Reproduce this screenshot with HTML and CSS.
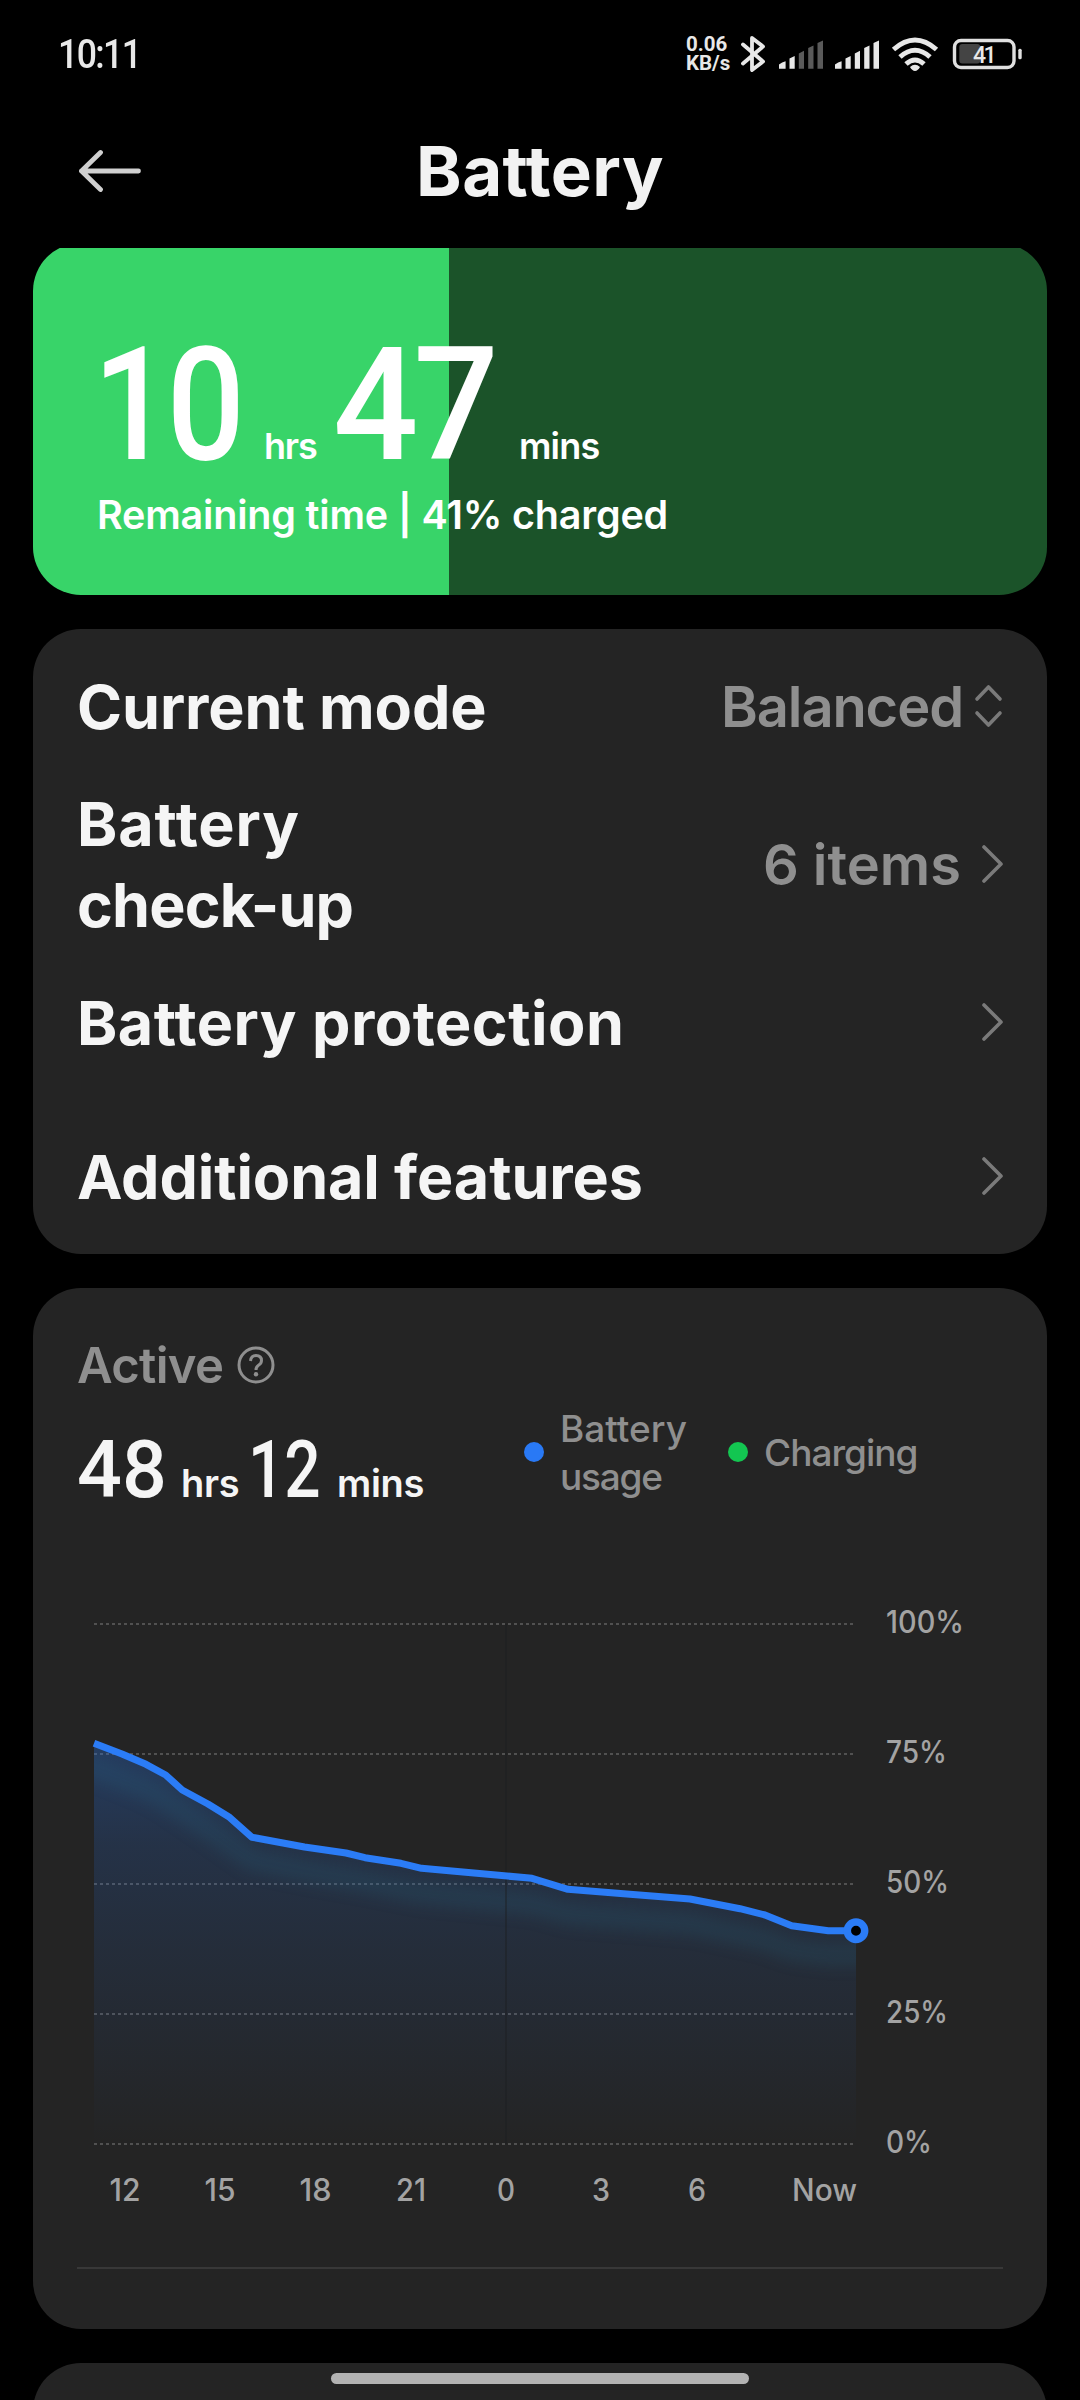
FILE: index.html
```html
<!DOCTYPE html>
<html lang="en">
<head>
<meta charset="utf-8">
<title>Battery</title>
<link rel="stylesheet" href="styles.css">
</head>
<body>
<div class="screen">
  <div class="statusbar">
    <span class="clock">10:11</span>
    <span class="netspeed"><span class="rate">0.06</span><span class="unit">KB/s</span></span>
    <svg class="status-icons" width="290" height="46" viewBox="738 30 290 46">
      <path class="bt" d="M743 44.5 L763 61.5 L752 70 V38 L763 46.5 L743 63.5"/>
      <g class="bars">
        <path d="M779 68.7V64.5Q782 62 785.6 61.3V68.7ZM789.5 68.7V58.5L794.7 56V68.7Z"/>
        <path class="dim" d="M798.8 68.7V53.5L804 50.7V68.7ZM808.2 68.7V48L813.5 45.5V68.7ZM817.5 68.7V43L823 40.5V68.7Z"/>
        <path d="M835 68.7V64.5Q838 62 841.6 61.3V68.7ZM845.5 68.7V58.5L850.7 56V68.7ZM854.8 68.7V53.5L860 50.7V68.7ZM864.2 68.7V48L869.5 45.5V68.7ZM873.5 68.7V43L879 40.5V68.7Z"/>
      </g>
      <g class="wifi">
        <path d="M893.5 49.5Q915 30.5 936.500 49.500"/>
        <path d="M900 57Q915 43.500 930 57"/>
        <path d="M906 64Q915 56 924 64"/>
        <path class="dot" d="M910 67Q915 62.500 920 67Q918 70.700 915 71Q912 70.700 910 67Z"/>
      </g>
      <rect class="cell" x="954.500" y="40.500" width="59.500" height="27" rx="6.500"/>
      <rect class="charge" x="959.300" y="44" width="21" height="19.500" rx="3"/>
      <rect class="nub" x="1018.300" y="48.700" width="3.400" height="10.500" rx="1.500"/>
      <text class="cell-text" x="973" y="63" textLength="23.500">41</text>
    </svg>
  </div>

  <header class="titlebar">
    <svg class="back" width="62" height="46" viewBox="79 148 62 46"><path d="M100.500 152.500L81.500 171L100.500 189.500M81.500 171H138.500"/></svg>
    <h1>Battery</h1>
  </header>

  <div class="hero-clip">
    <section class="hero">
      <div class="hero-time">
        <span class="num n1">10</span><span class="unit u1">hrs</span><span class="num n2">47</span><span class="unit u2">mins</span>
      </div>
      <div class="hero-sub">Remaining time | 41% charged</div>
    </section>
  </div>

  <section class="card menu">
    <div class="row">
      <span class="label l-mode">Current mode</span>
      <span class="value v-mode">Balanced</span>
      <svg class="icon updown" width="30" height="46" viewBox="0 0 30 46"><path d="M4 16L15.500 4L27 16M4 30L15.500 42L27 30"/></svg>
    </div>
    <div class="row tall">
      <span class="label l-check"><span class="l-batt">Battery</span><br>check-up</span>
      <span class="value v-items">6 items</span>
      <svg class="icon chev" width="24" height="42" viewBox="0 0 24 42"><path d="M5 4L22 21L5 38"/></svg>
    </div>
    <div class="row">
      <span class="label l-prot">Battery protection</span>
      <svg class="icon chev" width="24" height="42" viewBox="0 0 24 42"><path d="M5 4L22 21L5 38"/></svg>
    </div>
    <div class="row">
      <span class="label l-add">Additional features</span>
      <svg class="icon chev" width="24" height="42" viewBox="0 0 24 42"><path d="M5 4L22 21L5 38"/></svg>
    </div>
  </section>

  <section class="card usage">
    <div class="active">
      <span>Active</span>
      <svg width="38" height="38" viewBox="0 0 38 38"><circle cx="19" cy="19" r="17"/><path d="M13.500 15Q14 9.500 19 9.500Q24.500 9.500 24.500 14.500Q24.500 17.500 21.500 19.200Q19 20.800 19 24"/><circle class="pt" cx="19" cy="28.300" r="2.200"/></svg>
    </div>
    <div class="summary">
      <div class="total">
        <span class="num n1">48</span><span class="unit u1">hrs</span><span class="num n2">12</span><span class="unit u2">mins</span>
      </div>
      <div class="legend">
        <i class="dot blue"></i><span class="lg-usage">Battery<br><span class="lg-second">usage</span></span>
        <i class="dot green"></i><span class="lg-charge">Charging</span>
      </div>
    </div>
    <svg class="chart" width="926" height="679" viewBox="77 1590 926 677">
      <defs>
        <linearGradient id="area" gradientUnits="userSpaceOnUse" x1="0" y1="1743" x2="0" y2="2144">
          <stop offset="0" stop-color="#2878f5" stop-opacity=".29"/>
          <stop offset=".25" stop-color="#2878f5" stop-opacity=".17"/>
          <stop offset=".5" stop-color="#2878f5" stop-opacity=".11"/>
          <stop offset="1" stop-color="#2878f5" stop-opacity="0"/>
        </linearGradient>
        <filter id="soft" x="-10%" y="-30%" width="120%" height="160%"><feGaussianBlur stdDeviation="8"/></filter>
        <clipPath id="under"><path d="M94 1743.300L122 1754L146 1764.300L165.700 1775L182.200 1790L208 1804L228.700 1816.700L252 1837.300L304.500 1847L346 1853L365 1857.700L401 1863.300L421.600 1868.300L476.700 1873.300L532 1878.300L568 1889.300L626.700 1894L690 1899L740 1908.700L765 1915L791.700 1925.700L828.300 1930.700H856V2144H94Z"/></clipPath>
      </defs>
      <path class="grid" d="M94 1624H854M94 1754H854M94 1884H854M94 2014H854M94 2144H854"/>
      <g clip-path="url(#under)">
        <rect x="94" y="1740" width="762" height="404" fill="url(#area)"/>
        <path class="glow" d="M64 1757L94 1768L146 1789L165.700 1800L208 1829L252 1860L304.500 1871L365 1882L421.600 1893L532 1904L568 1914L690 1924L765 1940L791.700 1950L828.300 1955H886"/>
      </g>
      <path class="mid" d="M506 1624V2144"/>
      <path class="line" d="M94 1743.300L122 1754L146 1764.300L165.700 1775L182.200 1790L208 1804L228.700 1816.700L252 1837.300L304.500 1847L346 1853L365 1857.700L401 1863.300L421.600 1868.300L476.700 1873.300L532 1878.300L568 1889.300L626.700 1894L690 1899L740 1908.700L765 1915L791.700 1925.700L828.300 1930.700H856"/>
      <circle class="marker" cx="856" cy="1930.700" r="8.700"/>
      <g class="axis">
        <text x="886" y="1633" textLength="78" lengthAdjust="spacingAndGlyphs">100%</text>
        <text x="886" y="1763" textLength="61" lengthAdjust="spacingAndGlyphs">75%</text>
        <text x="886" y="1893" textLength="63" lengthAdjust="spacingAndGlyphs">50%</text>
        <text x="886" y="2023" textLength="62" lengthAdjust="spacingAndGlyphs">25%</text>
        <text x="886" y="2153" textLength="46" lengthAdjust="spacingAndGlyphs">0%</text>
      </g>
      <g class="axis hours">
        <text x="125" y="2201" textLength="31" lengthAdjust="spacingAndGlyphs">12</text>
        <text x="220" y="2201" textLength="31" lengthAdjust="spacingAndGlyphs">15</text>
        <text x="315.500" y="2201" textLength="32" lengthAdjust="spacingAndGlyphs">18</text>
        <text x="411" y="2201" textLength="30" lengthAdjust="spacingAndGlyphs">21</text>
        <text x="506" y="2201" textLength="18" lengthAdjust="spacingAndGlyphs">0</text>
        <text x="601" y="2201" textLength="18" lengthAdjust="spacingAndGlyphs">3</text>
        <text x="697" y="2201" textLength="18" lengthAdjust="spacingAndGlyphs">6</text>
        <text x="824.500" y="2201" textLength="65" lengthAdjust="spacingAndGlyphs">Now</text>
      </g>
    </svg>
  </section>

  <section class="card next"></section>
  <div class="home"></div>
</div>
</body>
</html>
```
FILE: styles.css
```css
* { box-sizing: border-box; }
body { margin: 0; background: #000; font-family: Inter, "Noto Sans", sans-serif; color: #f5f5f5; }
.screen { position: relative; width: 1080px; height: 2400px; overflow: hidden; background: #000; padding: 0 33px; display: flex; flex-direction: column; }
svg { display: block; flex: none; }

.statusbar { height: 110px; flex: none; display: flex; align-items: flex-start; padding: 30px 19px 0 25px; color: #e8e8e8; }
.clock { font: 500 40px/50px Roboto, sans-serif; letter-spacing: -1.8px; transform: scaleX(.89); transform-origin: left; }
.netspeed { display: flex; flex-direction: column; margin-left: auto; width: 52px; font: 700 20.500px/19px Roboto, sans-serif; padding-top: 5px; }
.bt { fill: none; stroke: #e8e8e8; stroke-width: 3.8; stroke-linejoin: round; stroke-linecap: round; }
.bars { fill: #e8e8e8; }
.bars .dim { fill: #5a5a5a; }
.wifi path { fill: none; stroke: #e8e8e8; stroke-width: 5; }
.wifi .dot { fill: #e8e8e8; stroke: none; }
.cell { fill: none; stroke: #e0e0e0; stroke-width: 3.4; }
.charge { fill: #444; }
.nub { fill: #e0e0e0; }
.cell-text { font: 500 23px Roboto, sans-serif; fill: #e8e8e8; }

.titlebar { height: 138px; flex: none; display: flex; align-items: center; justify-content: center; position: relative; padding-bottom: 16px; }
.back { position: absolute; left: 46px; top: 38px; }
.back path { fill: none; stroke: #d0d0d0; stroke-width: 4.8; stroke-linecap: round; stroke-linejoin: round; }
h1 { margin: 0; font-size: 69px; line-height: 84px; font-weight: 700; letter-spacing: .4px; color: #f2f2f2; }

.num { flex: none; transform-origin: left; }
.unit { flex: none; }

.hero-clip { height: 347px; overflow: hidden; flex: none; }
.hero { height: 352px; margin-top: -5px; border-radius: 48px; background: linear-gradient(90deg, #38d469 41%, #1b5329 41%); padding: 78px 65px 0; color: #fff; }
.hero-time { display: flex; align-items: baseline; height: 168px; line-height: 168px; }
.hero .num { font: 500 158px/168px Roboto, sans-serif; letter-spacing: -5px; }
.hero .unit { font-size: 36px; font-weight: 600; letter-spacing: -.8px; }
.hero .n1 { margin-left: -5px; width: 171px; transform: scaleX(.87); }
.hero .u1 { width: 69px; letter-spacing: -1.2px; }
.hero .n2 { width: 186px; transform: scaleX(.95); }
.hero-sub { font-size: 39.500px; line-height: 60px; margin-top: -4px; font-weight: 600; letter-spacing: -.2px; margin-left: -1px; }

.card { background: #242424; border-radius: 48px; flex: none; }
.menu { margin-top: 34px; height: 625px; padding: 0 44px; }
.row { height: 154px; display: flex; align-items: center; }
.row.tall { height: 162px; }
.label { font-size: 61px; line-height: 81px; font-weight: 700; flex: 1; padding-top: 2px; }
.l-mode { letter-spacing: -.1px; }
.l-check { letter-spacing: -.85px; }
.l-batt { letter-spacing: .9px; }
.l-prot { letter-spacing: .5px; }
.l-add { letter-spacing: -.1px; }
.value { font-size: 56px; font-weight: 600; color: #8f8f8f; white-space: nowrap; padding-top: 1px; }
.v-mode { letter-spacing: -1.1px; }
.v-items { letter-spacing: 0; }
.icon path { fill: none; stroke: #7a7a7a; stroke-width: 3.600; stroke-linecap: round; stroke-linejoin: round; }
.updown { margin-left: 10px; }
.chev { margin-left: 18px; }

.usage { margin-top: 34px; height: 1041px; padding: 46px 44px 0; }
.active { display: flex; align-items: center; gap: 14px; height: 62px; color: #8f8f8f; font-size: 49px; font-weight: 600; letter-spacing: -.7px; }
.active svg { fill: none; stroke: #8f8f8f; stroke-width: 3; }
.active .pt { fill: #8f8f8f; stroke: none; }
.summary { display: flex; height: 194px; }
.total { display: flex; align-items: baseline; width: 447px; height: 130px; line-height: 130px; padding-top: 9px; }
.total .num { font: 500 79px/130px Roboto, sans-serif; }
.total .unit { font-size: 38px; font-weight: 600; letter-spacing: -.3px; }
.total .n1 { width: 104px; }
.total .u1 { width: 67px; }
.total .n2 { width: 89px; transform: scaleX(.81); }
.legend { display: flex; align-items: center; height: 112px; color: #8f8f8f; font-size: 37px; line-height: 48px; font-weight: 500; letter-spacing: 0; }
.dot { width: 20px; height: 20px; border-radius: 50%; flex: none; }
.blue { background: #2979f5; }
.green { background: #13c651; }
.lg-usage, .lg-charge { margin-left: 16px; }
.lg-usage { width: 168px; padding-top: 1px; }
.lg-second { letter-spacing: -1.2px; }
.lg-charge { letter-spacing: -1px; padding-top: 1px; }

.chart { border-bottom: 2px solid #383838; }
.grid { fill: none; stroke: #515151; stroke-width: 2; stroke-dasharray: 3 3; }
.mid { stroke: #1c1f22; stroke-width: 1.500; opacity: .6; }
.line { fill: none; stroke: #2b7cf6; stroke-width: 7; stroke-linejoin: round; }
.glow { fill: none; stroke: #2f7390; stroke-width: 22; opacity: .17; filter: url(#soft); }
.marker { fill: #000; stroke: #2b7cf6; stroke-width: 7.500; }
.axis { font: 500 31px Inter, sans-serif; fill: #a3a3a3; }
.hours { text-anchor: middle; }

.next { margin-top: 34px; height: 100px; }
.home { position: absolute; left: 331px; top: 2373px; width: 418px; height: 11px; border-radius: 6px; background: #b3b3b3; }
```
